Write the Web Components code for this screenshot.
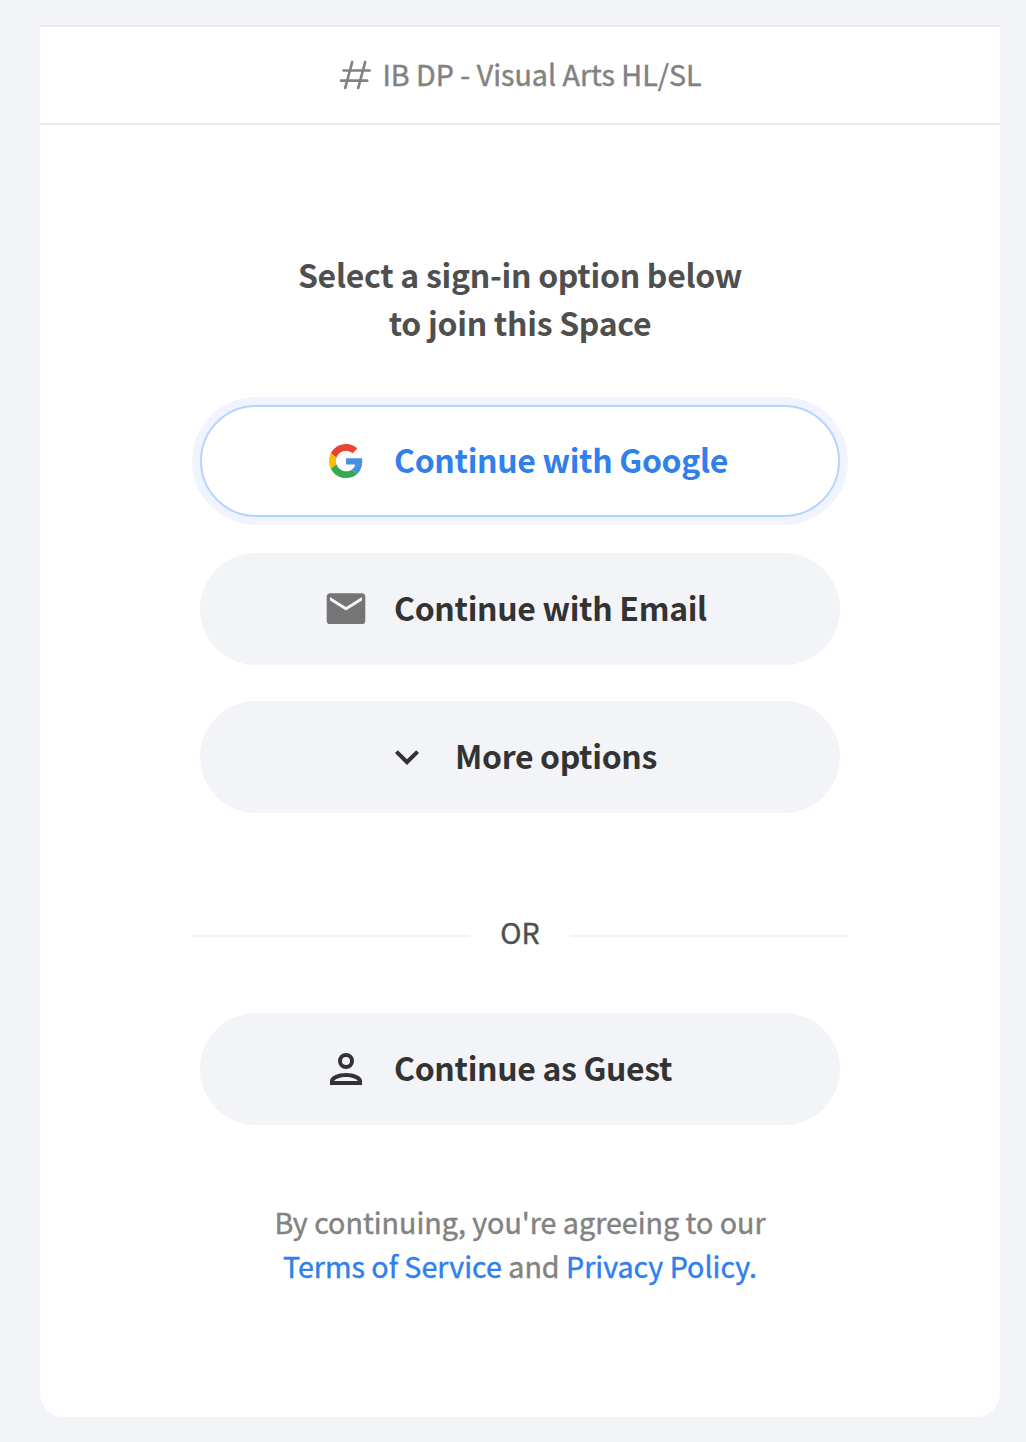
<!DOCTYPE html>
<html lang="en">
<head>
<meta charset="utf-8">
<title>Join Space</title>
<style>
    body {
        margin: 0;
        background: #f3f4f8;
        font-family: "Noto Sans CJK SC", sans-serif;
        color: #333333;
    }
</style>
</head>
<body>
<join-card>
    <space-header slot="header">IB DP - Visual Arts HL/SL</space-header>
    <span slot="title">Select a sign-in option below<br>to join this Space</span>
    <signin-button icon="google" primary>Continue with Google</signin-button>
    <signin-button icon="email">Continue with Email</signin-button>
    <signin-button icon="more" centered>More options</signin-button>
    <or-divider>OR</or-divider>
    <signin-button icon="guest">Continue as Guest</signin-button>
    <legal-note></legal-note>
</join-card>

<script>
class JoinCard extends HTMLElement {

    constructor() {
        super();
        this.attachShadow({ mode: "open" });
        this.shadowRoot.innerHTML = /*html*/ `
            <style>
                :host {
                    display: block;
                    box-sizing: border-box;
                    height: 1442px;
                    padding: 25px 26px 25px 40px;
                }
                .card {
                    box-sizing: border-box;
                    height: 1392px;
                    background: white;
                    border-top: 2px solid #e9eaef;
                    border-radius: 0 0 24px 24px;
                }
                .content {
                    display: flex;
                    flex-direction: column;
                    align-items: center;
                    padding-top: 125px;
                }
                h1 {
                    margin: 0 0 59px;
                    font-size: 32px;
                    font-weight: 700;
                    line-height: 48px;
                    letter-spacing: -0.29px;
                    text-align: center;
                    color: #4f4f4f;
                }
                .options {
                    display: flex;
                    flex-direction: column;
                    align-items: center;
                    gap: 36px;
                }
            </style>
            <div class="card">
                <slot name="header"></slot>
                <div class="content">
                    <h1><slot name="title"></slot></h1>
                    <div class="options"><slot></slot></div>
                </div>
            </div>
        `;
    }
}

class SpaceHeader extends HTMLElement {

    constructor() {
        super();
        this.attachShadow({ mode: "open" });
        this.shadowRoot.innerHTML = /*html*/ `
            <style>
                :host {
                    display: flex;
                    box-sizing: border-box;
                    height: 98px;
                    align-items: center;
                    justify-content: center;
                    gap: 11px;
                    padding-left: 1px;
                    border-bottom: 2px solid #e9eaef;
                    color: #828282;
                    font-size: 28.65px;
                    line-height: 48px;
                    -webkit-text-stroke: 0.45px;
                }
                .name {
                    padding-bottom: 3px;
                }
            </style>
            <svg width="32" height="30" viewBox="0 0 32 30" fill="none" stroke="#828282" stroke-width="2.7" stroke-linecap="round">
                <path d="M4.600 10.500H30.600M2.100 20.700H28.200M13.200 2L6.200 28M26.200 2L19.200 28"/>
            </svg>
            <span class="name"><slot></slot></span>
        `;
    }
}

const icons = {
    google: `
        <svg width="34" height="34" viewBox="0 0 48 48">
            <path fill="#EA4335" d="M24 9.500c3.540 0 6.710 1.220 9.210 3.600l6.850-6.850C35.900 2.380 30.470 0 24 0 14.620 0 6.510 5.380 2.560 13.220l7.980 6.190C12.430 13.720 17.740 9.500 24 9.500z"/>
            <path fill="#4A90E2" d="M46.980 24.550c0-1.570-.15-3.090-.38-4.550H24v9.020h12.940c-.58 2.960-2.260 5.480-4.780 7.180l7.730 6c4.510-4.180 7.090-10.360 7.090-17.650z"/>
            <path fill="#FBBC05" d="M10.530 28.590c-.48-1.450-.76-2.990-.76-4.590s.27-3.140.76-4.590l-7.980-6.190C.92 16.460 0 20.120 0 24c0 3.880.92 7.540 2.560 10.780l7.970-6.190z"/>
            <path fill="#34A853" d="M24 48c6.480 0 11.930-2.130 15.890-5.810l-7.730-6c-2.150 1.450-4.920 2.300-8.160 2.300-6.260 0-11.570-4.220-13.470-9.910l-7.980 6.190C6.510 42.620 14.620 48 24 48z"/>
        </svg>`,
    email: `
        <svg width="40" height="32" viewBox="0 0 40 32">
            <rect x="0.700" y="0.300" width="38.600" height="30.700" rx="3.600" fill="#757575"/>
            <path d="M4 4V7.500L20 17.500L36 7.500V4L20 14Z" fill="#f3f4f8"/>
        </svg>`,
    more: `
        <svg width="48" height="48" viewBox="0 0 24 24">
            <path fill="#333333" d="M16.590 8.590L12 13.170 7.410 8.590 6 10l6 6 6-6z"/>
        </svg>`,
    guest: `
        <svg width="48" height="48" viewBox="0 0 48 48">
            <circle cx="24" cy="16" r="6" fill="none" stroke="#333333" stroke-width="4"/>
            <path fill="#333333" fill-rule="evenodd" d="M8 40V36C8 31 16 28 24 28S40 31 40 36V40ZM12 36H36C34.500 34 29.500 32 24 32S13.500 34 12 36Z"/>
        </svg>`
};

class SigninButton extends HTMLElement {

    constructor() {
        super();
        this.attachShadow({ mode: "open" });
        this.shadowRoot.innerHTML = /*html*/ `
            <style>
                :host {
                    display: block;
                }
                button {
                    display: flex;
                    box-sizing: border-box;
                    width: 640px;
                    height: 112px;
                    align-items: center;
                    gap: 24px;
                    padding: 0 0 0 120px;
                    border: 2px solid transparent;
                    border-radius: 56px;
                    background: #f3f4f8;
                    color: #333333;
                    font: 700 32px/48px "Noto Sans CJK SC", sans-serif;
                    letter-spacing: -0.34px;
                }
                :host([primary]) button {
                    background: white;
                    border-color: #b3d4ff;
                    box-shadow: 0 0 0 8px #eff4ff;
                    color: #2f80ed;
                }
                :host([centered]) button {
                    padding-left: 181px;
                }
                .icon {
                    display: flex;
                    width: 48px;
                    height: 48px;
                    align-items: center;
                    justify-content: center;
                }
                .label {
                    padding-bottom: 4px;
                }
            </style>
            <button type="button">
                <span class="icon"></span>
                <span class="label"><slot></slot></span>
            </button>
        `;
    }

    connectedCallback() {
        this.shadowRoot.querySelector(".icon").innerHTML = icons[this.getAttribute("icon")] || "";
    }
}

class OrDivider extends HTMLElement {

    constructor() {
        super();
        this.attachShadow({ mode: "open" });
        this.shadowRoot.innerHTML = /*html*/ `
            <style>
                :host {
                    display: flex;
                    width: 656px;
                    height: 48px;
                    margin: 63px 0 17px;
                    align-items: center;
                    color: #4f4f4f;
                    font-size: 28.65px;
                    line-height: 38px;
                    -webkit-text-stroke: 0.4px;
                }
                .line {
                    flex: 1;
                    height: 2px;
                    background: #f2f2f2;
                }
                .label {
                    width: 100px;
                    padding-bottom: 9px;
                    text-align: center;
                }
            </style>
            <div class="line"></div>
            <span class="label"><slot></slot></span>
            <div class="line"></div>
        `;
    }
}

class LegalNote extends HTMLElement {

    constructor() {
        super();
        this.attachShadow({ mode: "open" });
        this.shadowRoot.innerHTML = /*html*/ `
            <style>
                :host {
                    display: block;
                    margin-top: 39px;
                    color: #828282;
                    font-size: 28.65px;
                    line-height: 44px;
                    text-align: center;
                    -webkit-text-stroke: 0.45px;
                }
                a {
                    color: #2f80ed;
                    text-decoration: none;
                }
            </style>
            By continuing, you're agreeing to our<br>
            <a href="#">Terms of Service</a> and <a href="#">Privacy Policy.</a>
        `;
    }
}

customElements.define("join-card", JoinCard);
customElements.define("space-header", SpaceHeader);
customElements.define("signin-button", SigninButton);
customElements.define("or-divider", OrDivider);
customElements.define("legal-note", LegalNote);
</script>
</body>
</html>
